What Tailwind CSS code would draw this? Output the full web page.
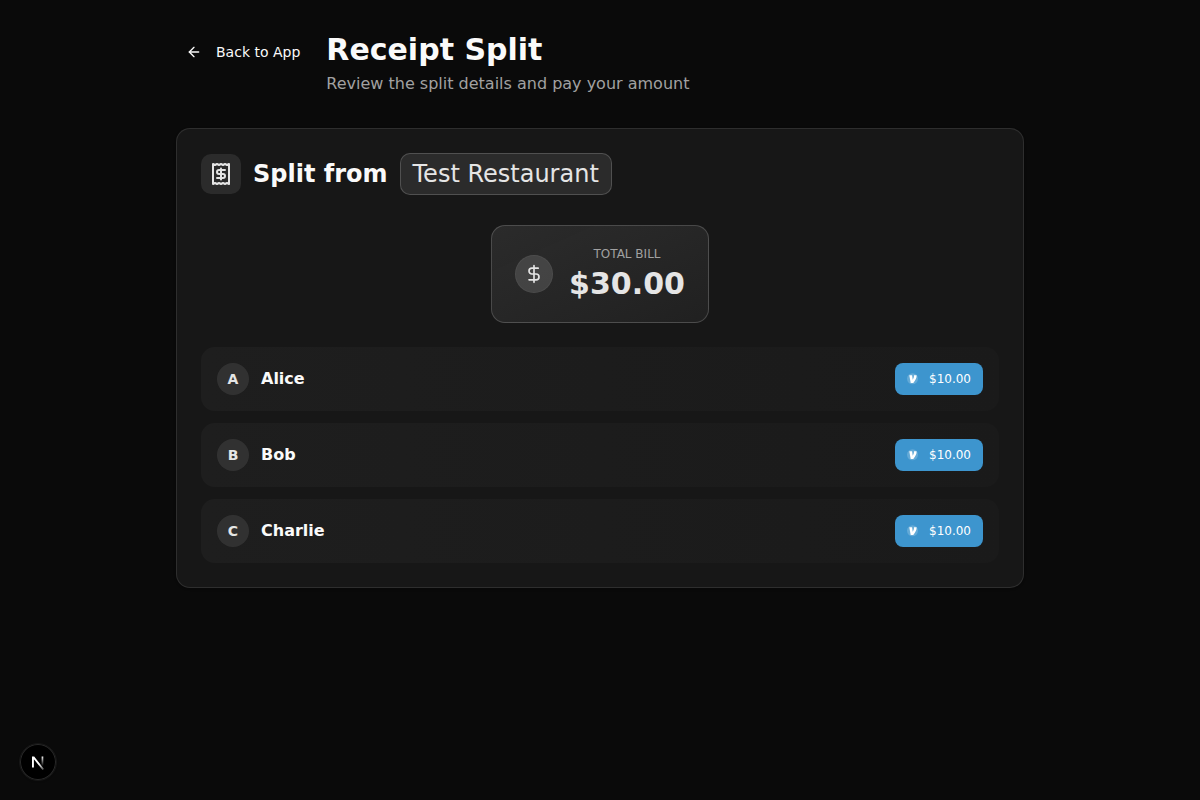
<!DOCTYPE html>
<html lang="en">
<head>
<meta charset="utf-8">
<meta name="viewport" content="width=device-width, initial-scale=1">
<title>Receipt Split</title>
<script src="https://cdn.jsdelivr.net/npm/@tailwindcss/browser@4"></script>
</head>
<body class="min-h-screen bg-[#0a0a0a] font-['DejaVu_Sans',sans-serif] text-neutral-50">
<svg class="hidden" aria-hidden="true">
  <symbol id="venmo" viewBox="0 0 24 24">
    <circle cx="11" cy="11.500" r="11" fill="#fff" fill-opacity=".2"/>
    <path d="M4.600 4.500h5.600l1.200 9c2-3.200 2.800-6 2.500-9h5.300c.5 5.200-2.400 10.300-6.600 15.500H7.400z" fill="#fff"/>
  </symbol>
</svg>
<main class="mx-auto max-w-4xl px-6 py-8">
  <header class="mb-8 flex items-start gap-4">
    <button type="button" class="mt-1 flex h-8 items-center gap-3.5 rounded-md px-2.5 text-sm font-medium whitespace-nowrap">
      <svg class="size-4" viewBox="0 0 24 24" fill="none" stroke="currentColor" stroke-width="2" stroke-linecap="round" stroke-linejoin="round" aria-hidden="true"><path d="m12 19-7-7 7-7"/><path d="M19 12H5"/></svg>
      Back to App
    </button>
    <div>
      <h1 class="text-3xl font-bold">Receipt Split</h1>
      <p class="mt-1 text-base text-[#a1a1a1]">Review the split details and pay your amount</p>
    </div>
  </header>

  <section class="rounded-[14px] border border-white/10 bg-[#171717] p-6 shadow-sm">
    <h2 class="flex items-center gap-3 text-2xl font-bold">
      <span class="flex size-10 items-center justify-center rounded-[10px] bg-neutral-200/10 text-neutral-200">
        <svg class="size-6" viewBox="0 0 24 24" fill="none" stroke="currentColor" stroke-width="2" stroke-linecap="round" stroke-linejoin="round" aria-hidden="true"><path d="M4 2v20l2-1 2 1 2-1 2 1 2-1 2 1 2-1 2 1V2l-2 1-2-1-2 1-2-1-2 1-2-1-2 1Z"/><path d="M16 8h-6a2 2 0 1 0 0 4h4a2 2 0 1 1 0 4H8"/><path d="M12 17.500v-11"/></svg>
      </span>
      <span>Split from</span>
      <span class="rounded-[10px] border border-neutral-200/20 bg-neutral-200/10 px-3 py-1 font-normal text-neutral-200">Test Restaurant</span>
    </h2>

    <div class="mt-[30px] flex justify-center">
      <div class="flex items-center gap-4 rounded-[14px] border border-neutral-200/20 bg-linear-to-br from-neutral-200/10 to-neutral-200/5 px-[23px] py-5">
        <span class="flex size-[38px] items-center justify-center rounded-full border border-neutral-200/5 bg-neutral-200/15 text-neutral-200">
          <svg class="size-5" viewBox="0 0 24 24" fill="none" stroke="currentColor" stroke-width="2" stroke-linecap="round" stroke-linejoin="round" aria-hidden="true"><path d="M12 2v20"/><path d="M17 5H9.500a3.500 3.500 0 0 0 0 7h5a3.500 3.500 0 0 1 0 7H6"/></svg>
        </span>
        <div class="text-center">
          <p class="text-xs text-[#a1a1a1] uppercase">Total Bill</p>
          <p class="mt-1 text-3xl font-bold text-neutral-200">$30.00</p>
        </div>
      </div>
    </div>

    <ul class="mt-6 flex flex-col gap-3">
      <li class="flex items-center gap-3 rounded-[14px] bg-linear-to-r from-[#1e1e1e] to-[#1a1a1a] p-4">
        <span class="flex size-8 items-center justify-center rounded-full bg-neutral-200/10 text-sm font-bold text-neutral-200">A</span>
        <span class="grow font-semibold">Alice</span>
        <button type="button" class="flex h-8 items-center gap-2.5 rounded-lg bg-[#3d95ce] px-3 text-xs font-medium text-white"><svg class="size-3" aria-hidden="true"><use href="#venmo"/></svg>$10.00</button>
      </li>
      <li class="flex items-center gap-3 rounded-[14px] bg-linear-to-r from-[#1e1e1e] to-[#1a1a1a] p-4">
        <span class="flex size-8 items-center justify-center rounded-full bg-neutral-200/10 text-sm font-bold text-neutral-200">B</span>
        <span class="grow font-semibold">Bob</span>
        <button type="button" class="flex h-8 items-center gap-2.5 rounded-lg bg-[#3d95ce] px-3 text-xs font-medium text-white"><svg class="size-3" aria-hidden="true"><use href="#venmo"/></svg>$10.00</button>
      </li>
      <li class="flex items-center gap-3 rounded-[14px] bg-linear-to-r from-[#1e1e1e] to-[#1a1a1a] p-4">
        <span class="flex size-8 items-center justify-center rounded-full bg-neutral-200/10 text-sm font-bold text-neutral-200">C</span>
        <span class="grow font-semibold">Charlie</span>
        <button type="button" class="flex h-8 items-center gap-2.5 rounded-lg bg-[#3d95ce] px-3 text-xs font-medium text-white"><svg class="size-3" aria-hidden="true"><use href="#venmo"/></svg>$10.00</button>
      </li>
    </ul>
  </section>
</main>

<button type="button" aria-label="Open developer tools" class="fixed bottom-5 left-5 flex size-9 items-center justify-center rounded-full bg-black shadow-sm ring-1 ring-[#292929] ring-inset outline-1 outline-[#171717]">
  <svg class="size-10 shrink-0" viewBox="0 0 40 40" fill="none" aria-hidden="true">
    <defs>
      <linearGradient id="n-diagonal" gradientUnits="userSpaceOnUse" x1="21" y1="22" x2="27" y2="29"><stop stop-color="#fff"/><stop offset="1" stop-color="#fff" stop-opacity=".1"/></linearGradient>
      <linearGradient id="n-stem" gradientUnits="userSpaceOnUse" x1="25" y1="14" x2="25" y2="24"><stop stop-color="#fff"/><stop offset="1" stop-color="#fff" stop-opacity="0"/></linearGradient>
    </defs>
    <path d="M14 14.500h2.200L26 27l-1.400 1L15.900 17.200V25.500H14z" fill="url(#n-diagonal)"/>
    <path d="M23.600 14.500h1.700v9.500h-1.700z" fill="url(#n-stem)"/>
  </svg>
</button>
</body>
</html>
